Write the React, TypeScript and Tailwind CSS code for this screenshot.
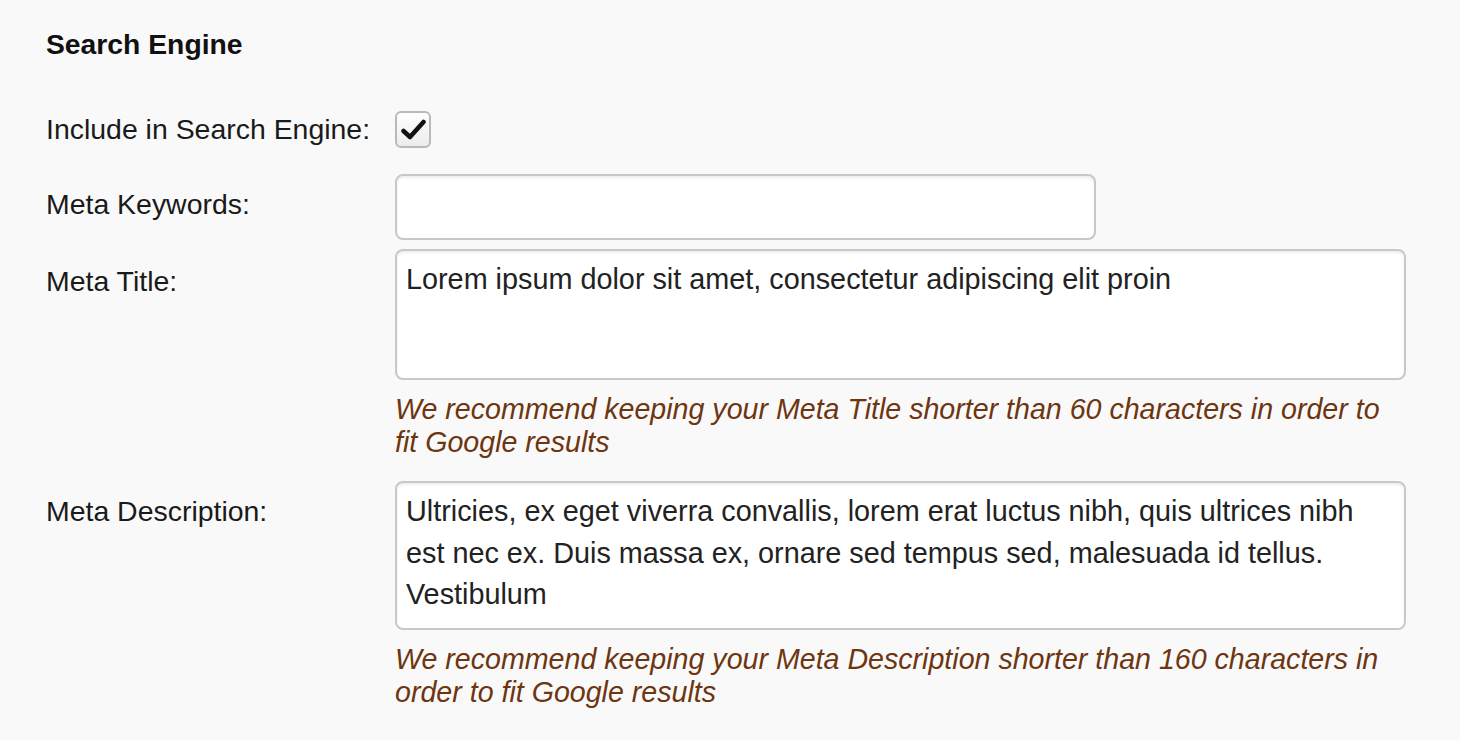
import React from 'react';

const fieldBox =
  'rounded-[8px] border-2 border-[#c8c8c8] bg-white shadow-[inset_0_2px_3px_rgba(0,0,0,0.07)] px-[9px] pt-[8px] text-[#222] text-[28.8px] leading-[41.5px]';

function Label({ children, className = '' }: { children: React.ReactNode; className?: string }) {
  return <div className={`w-[349px] shrink-0 text-[#1a1a1a] text-[28.45px] ${className}`}>{children}</div>;
}

function Help({ children }: { children: React.ReactNode }) {
  return <p className="mt-[13px] italic text-[#6d3510] text-[28.6px] leading-[33px]">{children}</p>;
}

export default function App() {
  return (
    <div
      className="min-h-[740px] bg-[#f9f9f9] pl-[46px] pt-[28px] text-[28px]"
      style={{ fontFamily: '"Liberation Sans", Arial, Helvetica, sans-serif' }}
    >
      <h2 className="font-bold text-[#111] text-[28.3px] leading-[32px]">Search Engine</h2>

      <div className="mt-[51px] flex items-center">
        <Label className="leading-[37px]">Include in Search Engine:</Label>
        <div className="w-[36px] h-[37px] rounded-[6px] border-2 border-[#b9b9b9] bg-gradient-to-b from-white to-[#ececec] flex items-center justify-center">
          <svg width="25" height="21" viewBox="0 0 25 21">
            <path d="M2.5 12 L9 18 L22.5 3" fill="none" stroke="#111" strokeWidth="4.5" strokeLinecap="round" strokeLinejoin="round" />
          </svg>
        </div>
      </div>

      <div className="mt-[26px] flex">
        <Label className="pt-[10px] leading-[41.5px]">Meta Keywords:</Label>
        <div className={`${fieldBox} w-[701px] h-[66px]`} />
      </div>

      <div className="mt-[9px] flex">
        <Label className="pt-[12px] leading-[41.5px]">Meta Title:</Label>
        <div className="w-[1011px]">
          <div className={`${fieldBox} h-[131px]`}>Lorem ipsum dolor sit amet, consectetur adipiscing elit proin</div>
          <Help>
            We recommend keeping your Meta Title shorter than 60 characters in order to
            <br />
            fit Google results
          </Help>
        </div>
      </div>

      <div className="mt-[22px] flex">
        <Label className="pt-[10px] leading-[41.5px]">Meta Description:</Label>
        <div className="w-[1011px]">
          <div className={`${fieldBox} h-[149px]`}>
            Ultricies, ex eget viverra convallis, lorem erat luctus nibh, quis ultrices nibh
            <br />
            est nec ex. Duis massa ex, ornare sed tempus sed, malesuada id tellus.
            <br />
            Vestibulum
          </div>
          <Help>
            We recommend keeping your Meta Description shorter than 160 characters in
            <br />
            order to fit Google results
          </Help>
        </div>
      </div>
    </div>
  );
}
